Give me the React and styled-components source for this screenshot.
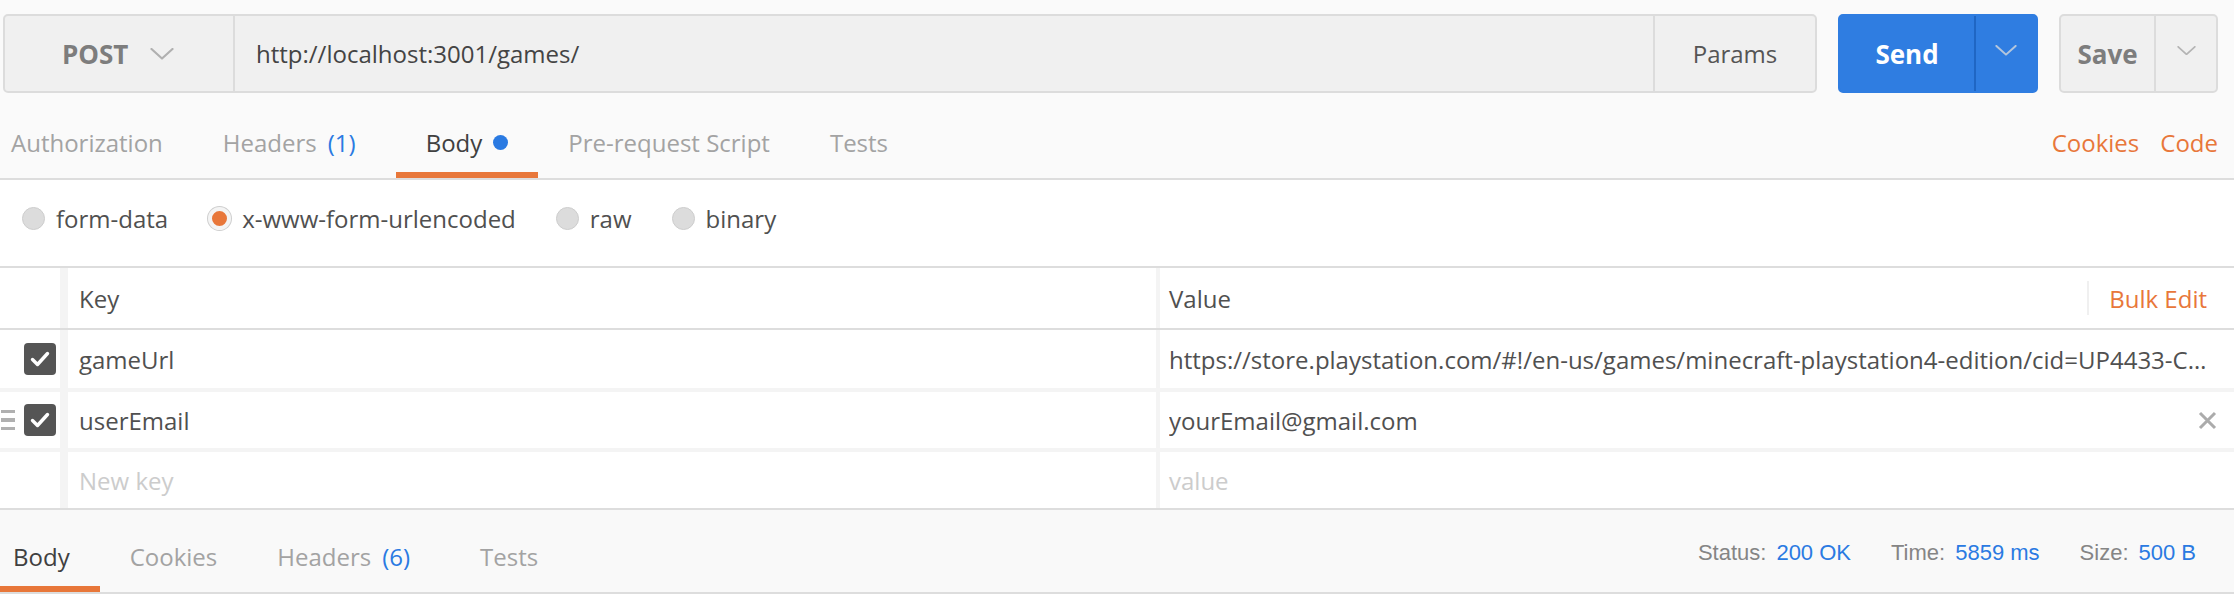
import styled, { createGlobalStyle } from "styled-components";

const GlobalStyle = createGlobalStyle`
  html, body {
    margin: 0;
    padding: 0;
    background: #ffffff;
  }
  body {
    font-family: "Open Sans", "Liberation Sans", sans-serif;
    font-size: 24px;
    color: #505050;
  }
  * {
    box-sizing: border-box;
  }
`;

const ORANGE = "#e8773a";
const BLUE = "#2a7ae2";

const Chevron = ({ size = 24, color = "#aaa" }) => (
  <svg width={size} height={size / 2} viewBox="0 0 24 12" fill="none">
    <polyline
      points="1.5,1 12,10.5 22.5,1"
      stroke={color}
      strokeWidth="2.2"
      strokeLinecap="round"
      strokeLinejoin="round"
    />
  </svg>
);

const CheckIcon = () => (
  <svg width="32" height="32" viewBox="0 0 32 32">
    <rect x="0" y="0" width="32" height="32" rx="4" fill="#555555" />
    <polyline
      points="8.5,16.5 13.5,21.5 23.5,10.5"
      fill="none"
      stroke="#ffffff"
      strokeWidth="3.4"
      strokeLinecap="round"
      strokeLinejoin="round"
    />
  </svg>
);

const CloseIcon = () => (
  <svg width="19" height="19" viewBox="0 0 19 19">
    <path d="M2 2 L17 17 M17 2 L2 17" stroke="#ababab" strokeWidth="3" />
  </svg>
);

const App = () => {
  return (
    <>
      <GlobalStyle />
      <Page>
        <RequestArea>
          <UrlBar>
            <UrlGroup>
              <MethodSelect>
                <MethodName>POST</MethodName>
                <Chevron size={24} color="#b0b0b0" />
              </MethodSelect>
              <UrlInput>http://localhost:3001/games/</UrlInput>
              <ParamsButton>Params</ParamsButton>
            </UrlGroup>
            <SplitButton $primary>
              <SplitMain $primary>Send</SplitMain>
              <SplitArrow $primary>
                <Chevron size={22} color="#b4c6dc" />
              </SplitArrow>
            </SplitButton>
            <SplitButton $width={159}>
              <SplitMain>Save</SplitMain>
              <SplitArrow>
                <Chevron size={19} color="#b4b4b4" />
              </SplitArrow>
            </SplitButton>
          </UrlBar>

          <TabBar $height={87}>
            <TabList>
              <Tab $padTop={19}>Authorization</Tab>
              <Tab $padTop={19}>
                Headers <Count>(1)</Count>
              </Tab>
              <Tab $padTop={19} $active>
                Body <Dot />
              </Tab>
              <Tab $padTop={19}>Pre-request Script</Tab>
              <Tab $padTop={19}>Tests</Tab>
            </TabList>
            <TabLinks>
              <OrangeLink>Cookies</OrangeLink>
              <OrangeLink>Code</OrangeLink>
            </TabLinks>
          </TabBar>
        </RequestArea>

        <RadioRow>
          <RadioOption>
            <Radio />
            form-data
          </RadioOption>
          <RadioOption>
            <Radio $checked />
            x-www-form-urlencoded
          </RadioOption>
          <RadioOption>
            <Radio />
            raw
          </RadioOption>
          <RadioOption>
            <Radio />
            binary
          </RadioOption>
        </RadioRow>

        <KvTable>
          <KvRow $header>
            <CheckCell />
            <KeyCell>Key</KeyCell>
            <ValueCell>
              <span>Value</span>
              <BulkEdit>Bulk Edit</BulkEdit>
            </ValueCell>
          </KvRow>
          <KvRows>
            <KvRow $height={58}>
              <CheckCell>
                <CheckIcon />
              </CheckCell>
              <KeyCell>gameUrl</KeyCell>
              <ValueCell>
                <ValueText>
                  https://store.playstation.com/#!/en-us/games/minecraft-playstation4-edition/cid=UP4433-CUSA00265_00-MINECRAFTPS40001
                </ValueText>
              </ValueCell>
            </KvRow>
            <KvRow>
              <CheckCell>
                <DragHandle>
                  <span />
                  <span />
                  <span />
                </DragHandle>
                <CheckIcon />
              </CheckCell>
              <KeyCell>userEmail</KeyCell>
              <ValueCell $withClose>
                <ValueText>yourEmail@gmail.com</ValueText>
                <CloseIcon />
              </ValueCell>
            </KvRow>
            <KvRow>
              <CheckCell />
              <KeyCell $placeholder>New key</KeyCell>
              <ValueCell $placeholder>value</ValueCell>
            </KvRow>
          </KvRows>
        </KvTable>

        <ResponseBar>
          <TabList>
            <Tab $padTop={17} $first={13} $active>
              Body
            </Tab>
            <Tab $padTop={17}>Cookies</Tab>
            <Tab $padTop={17}>
              Headers <Count>(6)</Count>
            </Tab>
            <Tab $padTop={17}>Tests</Tab>
          </TabList>
          <StatusList>
            <StatusItem>
              Status:<StatusValue>200 OK</StatusValue>
            </StatusItem>
            <StatusItem>
              Time:<StatusValue>5859 ms</StatusValue>
            </StatusItem>
            <StatusItem>
              Size:<StatusValue>500 B</StatusValue>
            </StatusItem>
          </StatusList>
        </ResponseBar>
      </Page>
    </>
  );
};

export default App;

const Page = styled.div`
  width: 2234px;
  height: 606px;
  overflow: hidden;
  background: #ffffff;
`;

const RequestArea = styled.div`
  background: #fafafa;
`;

const UrlBar = styled.div`
  display: flex;
  gap: 21px;
  padding: 14px 16px 0 3px;
`;

const UrlGroup = styled.div`
  flex: 1;
  display: flex;
  height: 79px;
  border: 2px solid #dcdcdc;
  border-radius: 5px;
  background: #f0f0f0;
`;

const MethodSelect = styled.div`
  width: 230px;
  display: flex;
  align-items: center;
  gap: 22px;
  padding-left: 57px;
  border-right: 2px solid #dcdcdc;
`;

const MethodName = styled.span`
  font-size: 26px;
  font-weight: 700;
  color: #7d7d7d;
`;

const UrlInput = styled.div`
  flex: 1;
  display: flex;
  align-items: center;
  padding-left: 21px;
  color: #444444;
`;

const ParamsButton = styled.div`
  width: 162px;
  display: flex;
  align-items: center;
  justify-content: center;
  border-left: 2px solid #dcdcdc;
  color: #555555;
`;

const SplitButton = styled.div`
  width: ${(p) => (p.$width ? p.$width : 200)}px;
  height: 79px;
  display: flex;
  border-radius: 5px;
  background: ${(p) => (p.$primary ? "#2f7de1" : "#f0f0f0")};
  border: 2px solid ${(p) => (p.$primary ? "#2f7de1" : "#dcdcdc")};
`;

const SplitMain = styled.div`
  flex: 1;
  display: flex;
  align-items: center;
  justify-content: center;
  font-size: 26px;
  font-weight: 700;
  color: ${(p) => (p.$primary ? "#ffffff" : "#7d7d7d")};
  border-right: 2px solid ${(p) => (p.$primary ? "#1f66c4" : "#dcdcdc")};
`;

const SplitArrow = styled.div`
  width: 60px;
  display: flex;
  align-items: center;
  justify-content: center;
  padding-bottom: 6px;
`;

const TabBar = styled.div`
  height: ${(p) => p.$height}px;
  display: flex;
  justify-content: space-between;
  border-bottom: 2px solid #dddddd;
`;

const TabList = styled.div`
  display: flex;
  align-items: stretch;
`;

const Tab = styled.div`
  display: flex;
  align-items: center;
  gap: 11px;
  padding: ${(p) => p.$padTop}px 30px 0 30px;
  border-bottom: 6px solid ${(p) => (p.$active ? ORANGE : "transparent")};
  color: ${(p) => (p.$active ? "#404040" : "#a3a3a3")};
  white-space: nowrap;

  &:first-child {
    padding-left: ${(p) => (p.$first ? p.$first : 11)}px;
  }
`;

const Count = styled.span`
  margin-right: 10px;
  color: ${BLUE};
`;

const Dot = styled.span`
  width: 15px;
  height: 15px;
  border-radius: 50%;
  background: ${BLUE};
`;

const TabLinks = styled.div`
  display: flex;
  align-items: center;
  gap: 21px;
  padding: 19px 16px 6px 0;
`;

const OrangeLink = styled.span`
  color: ${ORANGE};
`;

const RadioRow = styled.div`
  height: 88px;
  display: flex;
  align-items: center;
  gap: 40px;
  padding: 0 0 10px 22px;
  border-bottom: 2px solid #dddddd;
  background: #ffffff;
`;

const RadioOption = styled.label`
  display: flex;
  align-items: center;
  gap: 11px;
  color: #505050;
`;

const Radio = styled.span`
  width: 23px;
  height: 23px;
  border-radius: 50%;
  background: ${(p) => (p.$checked ? ORANGE : "#dcdcdc")};
  border: ${(p) => (p.$checked ? "4px solid #f4f4f4" : "1px solid #cdcdcd")};
  box-shadow: ${(p) => (p.$checked ? "0 0 0 1px #cfcfcf" : "none")};
`;

const KvTable = styled.div`
  display: flex;
  flex-direction: column;
  background: #f4f4f4;
  border-bottom: 2px solid #dddddd;
`;

const KvRows = styled.div`
  display: flex;
  flex-direction: column;
  gap: 4px;
`;

const KvRow = styled.div`
  display: flex;
  gap: 4px;
  height: ${(p) => (p.$header ? 62 : p.$height ? p.$height : 56)}px;
  border-bottom: ${(p) => (p.$header ? "2px solid #dddddd" : "none")};
`;

const CheckCell = styled.div`
  width: 60px;
  margin-right: 4px;
  display: flex;
  align-items: center;
  justify-content: flex-end;
  gap: 9px;
  padding-right: 4px;
  background: #ffffff;
`;

const DragHandle = styled.div`
  width: 14px;
  display: flex;
  flex-direction: column;
  gap: 5px;

  span {
    display: block;
    height: 3.5px;
    background: #b0b0b0;
  }
`;

const KeyCell = styled.div`
  width: 1088px;
  display: flex;
  align-items: center;
  padding-left: 11px;
  background: #ffffff;
  color: ${(p) => (p.$placeholder ? "#cccccc" : "#505050")};
`;

const ValueCell = styled.div`
  flex: 1;
  min-width: 0;
  display: flex;
  align-items: center;
  justify-content: space-between;
  gap: 12px;
  padding: 0 ${(p) => (p.$withClose ? 17 : 27)}px 0 9px;
  background: #ffffff;
  color: ${(p) => (p.$placeholder ? "#cccccc" : "#505050")};
`;

const ValueText = styled.span`
  flex: 1;
  min-width: 0;
  overflow: hidden;
  text-overflow: ellipsis;
  white-space: nowrap;
`;

const BulkEdit = styled.span`
  height: 34px;
  display: flex;
  align-items: center;
  padding-left: 20px;
  border-left: 2px solid #f0f0f0;
  color: ${ORANGE};
`;

const ResponseBar = styled.div`
  height: 84px;
  display: flex;
  justify-content: space-between;
  background: #f9f9f9;
  border-bottom: 2px solid #dddddd;
`;

const StatusList = styled.div`
  display: flex;
  align-items: center;
  gap: 40px;
  padding: 4px 38px 0 0;
  font-family: "Liberation Sans", Arial, sans-serif;
  font-size: 22px;
`;

const StatusItem = styled.span`
  display: flex;
  gap: 10px;
  color: #858585;
`;

const StatusValue = styled.span`
  color: ${BLUE};
`;
